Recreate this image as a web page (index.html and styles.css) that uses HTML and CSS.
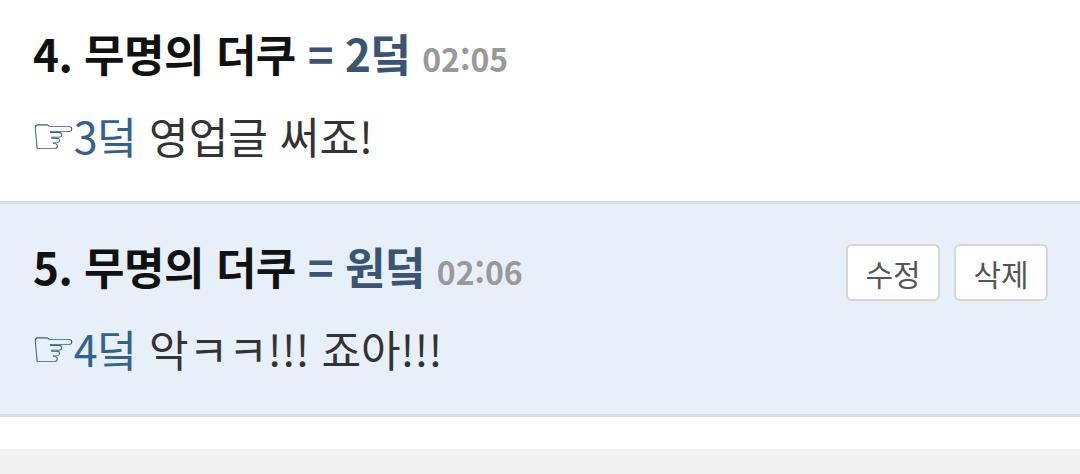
FILE: index.html
```html
<!DOCTYPE html>
<html lang="ko">
<head>
<meta charset="utf-8">
<link rel="stylesheet" href="styles.css">
</head>
<body>
<div class="list">
  <div class="item">
    <div class="head">
      <div class="title"><span class="name">4. 무명의 더쿠</span> <span class="tag">= 2덬</span> <span class="time">02:05</span></div>
    </div>
    <div class="body"><span class="ref"><span class="hand">☞</span>3덬</span> 영업글 써죠!</div>
  </div>
  <div class="item mine">
    <div class="head">
      <div class="title"><span class="name">5. 무명의 더쿠</span> <span class="tag">= 원덬</span> <span class="time">02:06</span></div>
      <div class="actions"><button class="btn">수정</button><button class="btn">삭제</button></div>
    </div>
    <div class="body"><span class="ref"><span class="hand">☞</span>4덬</span> 악ㅋㅋ!!! 죠아!!!</div>
  </div>
  <div class="spacer"></div>
  <div class="footer"></div>
</div>
</body>
</html>
```
FILE: styles.css
```css
html, body { margin: 0; padding: 0; background: #fff; }
body { font-family: "Noto Sans CJK KR", "Noto Sans", sans-serif; width: 1080px; height: 474px; overflow: hidden; }
.item { padding: 25px 32px 0 33px; height: 176px; border-bottom: 3px solid #dadcdf; }
.item.mine { background: #e7eff8; padding-top: 34px; height: 176px; }
.head { display: flex; align-items: center; justify-content: space-between; height: 60px; }
.title { font-size: 44px; line-height: 60px; font-weight: 700; color: #111; letter-spacing: -0.5px; white-space: nowrap; }
.tag { color: #3a5573; }
.time { color: #999; font-size: 32px; font-weight: 700; letter-spacing: 0; }
.actions { display: flex; gap: 14px; margin-top: 9px; }
.btn { font-family: inherit; font-size: 30px; color: #555; background: #fff; border: 2px solid #d6d6d6; border-radius: 6px; width: 94px; height: 57px; padding: 0; line-height: 1; }
.body { margin-top: 22px; font-size: 43px; line-height: 56px; color: #333; white-space: nowrap; }
.ref { color: #33628e; }
.hand { font-family: "DejaVu Sans", sans-serif; font-size: 52px; line-height: 0; margin-left: -3px; margin-right: -3px; }
.spacer { height: 32px; }
.footer { height: 25px; background: #f1f1f1; }
```
